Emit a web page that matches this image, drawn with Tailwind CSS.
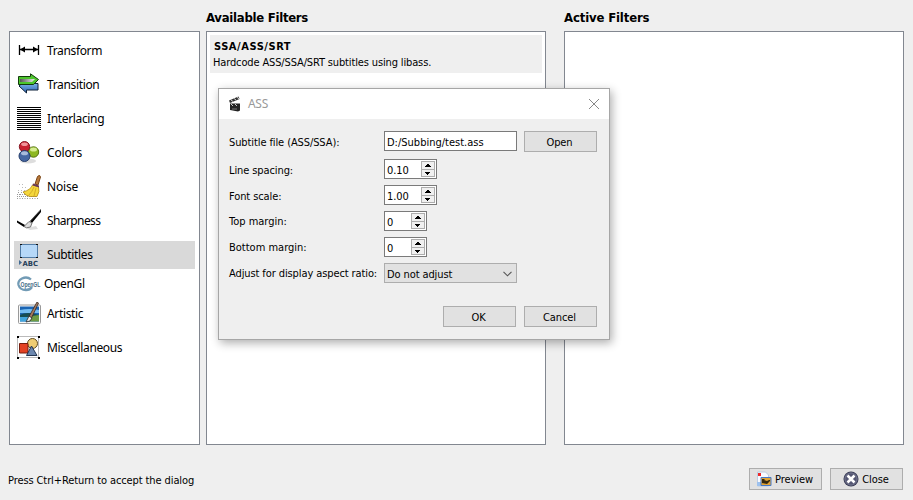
<!DOCTYPE html>
<html lang="en">
<head>
<meta charset="utf-8">
<title>Filters</title>
<script src="https://cdn.jsdelivr.net/npm/@tailwindcss/browser@4"></script>
</head>
<body class="relative flex h-[500px] w-[913px] flex-col overflow-hidden bg-[#efefef] font-['DejaVu_Sans_Condensed','DejaVu_Sans',sans-serif] text-[11px] leading-[14px] tracking-[-0.1px] text-black">
<main class="flex h-[445px] pl-[9px]">
  <nav class="mt-[31px] h-[414px] w-[191px] border border-[#828790] bg-white px-1 pt-[2px] font-['Noto_Sans',sans-serif] text-[12px] leading-[28px] tracking-[-0.35px]">
    <div class="flex h-[34px] items-center"><div class="flex h-7 w-full items-center gap-[6px] pl-[3px]">
      <svg class="size-6" viewBox="0 0 24 24"><path d="M2.500 6v10M21.500 6v10M3 10.500h18" stroke="#000" stroke-width="1.3"/><path d="M3 10.500l5-3v6zM21 10.500l-5-3v6z"/></svg>
      <span>Transform</span></div></div>
    <div class="flex h-[34px] items-center"><div class="flex h-7 w-full items-center gap-[6px] pl-[3px]">
      <svg class="size-6" viewBox="0 0 24 24"><defs><linearGradient id="gg"><stop stop-color="#555"/><stop offset="1" stop-color="#eee"/></linearGradient><linearGradient id="bl" x2="0" y2="1"><stop stop-color="#7fb4ea"/><stop offset="1" stop-color="#2a64b0"/></linearGradient></defs><path d="M21 10.500v6.500H9.500v3L2 13l3.500-3z" fill="url(#bl)" stroke="#0c2038"/><path d="M1.500 3.500h12V.8L21.500 6.500l-5 5h-15z" fill="#4cc62c" stroke="#123c0c"/><path d="M3 6h15l-3 3H3z" fill="url(#gg)"/></svg>
      <span>Transition</span></div></div>
    <div class="flex h-[34px] items-center"><div class="flex h-7 w-full items-center gap-[6px] pl-[3px]">
      <svg class="size-6" viewBox="0 0 24 24" shape-rendering="crispEdges"><path d="M0 .5h24M0 2.500h24M0 4.500h24M0 6.500h24M0 8.500h24M0 10.500h24M0 12.500h24M0 14.500h24M0 16.500h24M0 18.500h24M0 20.500h24M0 22.500h24" stroke="#000"/></svg>
      <span>Interlacing</span></div></div>
    <div class="flex h-[34px] items-center"><div class="flex h-7 w-full items-center gap-[6px] pl-[3px]">
      <svg class="size-6" viewBox="0 0 24 24"><ellipse cx="11" cy="20" rx="8" ry="2.500" fill="#0002"/><circle cx="16.500" cy="11" r="5.200" fill="#8db822" stroke="#567310"/><ellipse cx="16.500" cy="8.500" rx="3.500" ry="2" fill="#d6ec90"/><circle cx="7.500" cy="5.700" r="5.200" fill="#c82030" stroke="#861522"/><ellipse cx="7.500" cy="3.200" rx="3.400" ry="1.800" fill="#f0949a"/><circle cx="7.500" cy="15" r="5.500" fill="#4667a2" stroke="#263e6c"/><ellipse cx="7.500" cy="12.300" rx="3.500" ry="2" fill="#a8bbdb"/></svg>
      <span class="tracking-[-0.15px]">Colors</span></div></div>
    <div class="flex h-[34px] items-center"><div class="flex h-7 w-full items-center gap-[6px] pl-[3px]">
      <svg class="size-6" viewBox="0 0 24 24"><g fill="none" stroke="#999" stroke-width="1"><path d="M0 23.500h21" stroke-dasharray="1 1.500"/><path d="M0 21.500h20" stroke-dasharray="1 1"/><path d="M0 19.500h13" stroke-dasharray="1 1 2 1"/><path d="M1 17.500h8" stroke-dasharray="1 2"/><path d="M1 15.500h7M5 12.500h4M2 9.500h5" stroke-dasharray="1 2" stroke="#bbb"/></g><path d="M18 9L20.500 1.500q2.500-2.500 3 .500L21 10z" fill="#b9793b" stroke="#7b4617"/><path d="M15.500 10q-2 5-9.500 7 3 4 7 4.500h7q3-5 1.500-10z" fill="#f4d73c" stroke="#b48a16" stroke-width=".8"/><path d="M17 12q-2 5-5 8M19 13l-2 8" stroke="#d5ad28" fill="none"/><path d="M16 8.500l6 2v2l-6.500-2z" fill="#6b3a58"/></svg>
      <span class="tracking-[-0.15px]">Noise</span></div></div>
    <div class="flex h-[34px] items-center"><div class="flex h-7 w-full items-center gap-[6px] pl-[3px]">
      <svg class="size-6" viewBox="0 0 24 24"><path d="M9 19l10-2 2 3-8 1z" fill="#ddd"/><path d="M0 11.500l8 4.500-1 2-7-4.500z"/><path d="M13 12L24 0v3L15 14z"/><path d="M13 12.500L23.500 1.500" stroke="#777" stroke-width=".5"/><path d="M7 17.500l5-5 3 1.500-1.500 4-4 .8z" fill="#ddd" stroke="#555" stroke-width=".8"/></svg>
      <span class="tracking-[-0.6px]">Sharpness</span></div></div>
    <div class="flex h-[34px] items-center"><div class="flex h-7 w-full items-center gap-[6px] bg-[#d9d9d9] pl-[3px]">
      <svg class="size-6" viewBox="0 0 24 24"><path d="M3.500 1.500h17v13h-17z" fill="#b6d8f8" stroke="#527ca6"/><path d="M3 1h2v1H3zM19 1h2v1h-2zM3 14h2v1H3zM19 14h2v1h-2z" fill="#111"/><path d="M2 17l3 2.500L2 22z" fill="#426b94"/><text x="5.500" y="22.500" textLength="15.500" lengthAdjust="spacingAndGlyphs" font-family="DejaVu Sans" font-weight="bold" font-size="7" style="letter-spacing:0" fill="#263f59">ABC</text></svg>
      <span>Subtitles</span></div></div>
    <div class="flex h-[25px] items-start"><div class="flex h-[23px] w-full items-center gap-[5px] pl-[3px]">
      <svg class="h-4 w-[22px] overflow-visible" viewBox="0 0 22 16"><path d="M14 3.500Q10 0 5 2.500.5 5 1.500 9 3 14 9 14q4 0 6-3" fill="none" stroke="#729bb5" stroke-width="2.300"/><g transform="translate(3.500 10.500) scale(.72 1)"><text font-family="Liberation Sans" font-weight="bold" font-size="7" style="letter-spacing:0" fill="#456c88">OpenGL</text></g></svg>
      <span>OpenGl</span></div></div>
    <div class="flex h-[34px] items-center"><div class="flex h-7 w-full items-center gap-[6px] pl-[3px]">
      <svg class="size-6" viewBox="0 0 24 24"><rect x="1.500" y="3" width="22" height="18.500" rx="1" fill="#f8f8f8" stroke="#999"/><path d="M3 4.500h19v15H3z" fill="#1b65b4"/><path d="M3 8q9-2 19 0v3H3z" fill="#76bdf1"/><path d="M3 13q7-4 19 0v2H3z" fill="#174e54"/><path d="M3 15h12l-5 4.500H3z" fill="#42a5dc"/><path d="M15 14l7-1v6.500h-10z" fill="#6d9b43"/><path d="M12 14.500L20 0l1.500 1-7 15z" fill="#a57a5c" stroke="#392a25" stroke-width=".8"/><path d="M12 14l3 2-2 3-4 1z" fill="#eee" stroke="#222" stroke-width=".8"/></svg>
      <span>Artistic</span></div></div>
    <div class="flex h-[34px] items-center"><div class="flex h-7 w-full items-center gap-[6px] pl-[3px]">
      <svg class="size-6" viewBox="0 0 24 24" shape-rendering="auto"><path d="M.5.5h21v21H.5z" fill="none" stroke="#777" stroke-dasharray="1 1"/><path d="M0 0h2v2H0zM21 0h2v2h-2zM0 21h2v2H0zM21 21h2v2h-2z"/><circle cx="15.500" cy="7.500" r="5" fill="#efcd73" stroke="#5e4b20"/><path d="M2.500 7.500h8.500v9.500H2.500z" fill="#e34223" stroke="#761d0e"/><path d="M14.500 10L20 19.500H9.500z" fill="#6c87ae" stroke="#243753"/></svg>
      <span>Miscellaneous</span></div></div>
  </nav>
  <section class="ml-[6px] w-[340px]">
    <h2 class="flex h-[31px] items-center pt-[5px] text-[13px] font-bold tracking-[-0.27px]">Available Filters</h2>
    <div class="h-[414px] border border-[#828790] bg-white p-[3px]">
      <div class="h-[38px] bg-[#efefef] pl-[3px] pt-[4px]">
        <p class="pl-px text-[11px] font-bold leading-[15px] tracking-[0.55px]"><span>SSA/ASS/SRT</span></p>
        <p class="pt-px leading-[16px] tracking-[-0.14px]"><span>Hardcode ASS/SSA/SRT subtitles using libass.</span></p>
      </div>
    </div>
  </section>
  <section class="ml-[18px] w-[340px]">
    <h2 class="flex h-[31px] items-center pt-[5px] text-[13px] font-bold tracking-[-0.15px]">Active Filters</h2>
    <div class="h-[414px] border border-[#828790] bg-white"></div>
  </section>
</main>
<footer class="flex h-[55px] items-start pl-2 pt-[23px]">
  <p class="mt-[6px] flex-1">Press Ctrl+Return to accept the dialog</p>
  <button class="flex h-[22px] w-[73px] items-center justify-center gap-[3px] border border-[#adadad] bg-[#e1e1e1] pr-[2px]">
    <svg class="size-4" viewBox="0 0 16 16"><path d="M1.500 1h8l3 3v11h-11z" fill="#f7faff" stroke="#bccbe0"/><path d="M1 11h4v4H1z" fill="#9dc1ee"/><path d="M2 2h3v3H2z" fill="#ee2929"/><path d="M5 6.500h10v8H5z" fill="#e1a336" stroke="#4478c7"/><path d="M6 8h3l-1 1 3 1 2-1h1v1l-3 3-5-1z" fill="#35290f"/></svg>
    <span class="pt-[2px]">Preview</span></button>
  <button class="ml-2 mr-[10px] flex h-[22px] w-[73px] items-center justify-center gap-[3px] border border-[#adadad] bg-[#e1e1e1] pr-px">
    <svg class="size-4" viewBox="0 0 16 16"><circle cx="8" cy="8" r="7.500" fill="#343650"/><circle cx="8" cy="8" r="6.200" fill="#555773" stroke="#888ca4" stroke-width=".7"/><path d="M4.500 4.500l7 7M11.500 4.500l-7 7" stroke="#fff" stroke-width="2.600"/></svg>
    <span class="pt-[2px]">Close</span></button>
</footer>

<div role="dialog" class="absolute left-[218px] top-[88px] flex h-[252px] w-[392px] flex-col border border-[#a6a6a6] bg-[#efefef] shadow-[2px_3px_9px_rgba(0,0,0,0.32)]">
  <header class="flex h-[30px] items-center bg-white pl-[9px] pr-[9px] font-['Noto_Sans',sans-serif] text-[12px] tracking-[-0.3px] text-[#999]">
    <svg class="size-4" viewBox="0 0 16 16"><path d="M2 7.500h10v7l-2 1-8-1.500z" fill="#222"/><path d="M1 4.500L10.500.5l1 2.500L2 7z" fill="#333"/><path d="M3 4l2 1.500M6 2.500L8 4M9 1.300l2 1.500M3 8l2 2M7 8l2 2" stroke="#ddd" stroke-width=".9"/><path d="M4 13h5" stroke="#777"/></svg>
    <span class="ml-[4px] flex-1">ASS</span>
    <svg class="h-3 w-3" viewBox="0 0 12 12"><path d="M1 1l10 10M11 1L1 11" stroke="#888" fill="none"/></svg>
  </header>
  <form class="flex flex-1 flex-col pl-[10px] pr-3 pt-3">
    <div class="mb-[7px] flex h-[21px]"><label class="w-[155px] pt-[5px]">Subtitle file (ASS/SSA):</label><div class="h-5 w-[133px] border border-[#7a7a7a] bg-white pl-[2px] pt-1 tracking-normal"><span>D:/Subbing/test.ass</span></div><button type="button" class="ml-[7px] h-[21px] w-[73px] border border-[#adadad] bg-[#e1e1e1] pr-[2px] pt-[2px]"><span>Open</span></button></div>
    <div class="mb-[6px] flex h-5"><label class="w-[155px] pt-[5px]">Line spacing:</label><div class="flex h-5 w-[53px] border border-[#7a7a7a] bg-white p-px pl-[2px]"><span class="flex-1 pt-[3px]">0.10</span>
      <svg class="h-4 w-[14px]" viewBox="0 0 14 16" shape-rendering="crispEdges"><path d="M.5.5h13v15H.5zM0 8.500h14" fill="#f0f0f0" stroke="#adadad"/><path d="M6 3h2v1h1v1H5V4h1zM4 5h6v1H4zM4 11h5v1h-1v1H7v1H6v-1H5v-1H4z"/></svg></div></div>
    <div class="mb-[6px] flex h-5"><label class="w-[155px] pt-[5px]">Font scale:</label><div class="flex h-5 w-[53px] border border-[#7a7a7a] bg-white p-px pl-[2px]"><span class="flex-1 pt-[3px]">1.00</span>
      <svg class="h-4 w-[14px]" viewBox="0 0 14 16" shape-rendering="crispEdges"><path d="M.5.5h13v15H.5zM0 8.500h14" fill="#f0f0f0" stroke="#adadad"/><path d="M6 3h2v1h1v1H5V4h1zM4 5h6v1H4zM4 11h5v1h-1v1H7v1H6v-1H5v-1H4z"/></svg></div></div>
    <div class="mb-[6px] flex h-5"><label class="w-[155px] pt-1 tracking-normal">Top margin:</label><div class="flex h-5 w-[43px] border border-[#7a7a7a] bg-white p-px pl-[2px]"><span class="flex-1 pt-[3px]">0</span>
      <svg class="h-4 w-[14px]" viewBox="0 0 14 16" shape-rendering="crispEdges"><path d="M.5.5h13v15H.5zM0 8.500h14" fill="#f0f0f0" stroke="#adadad"/><path d="M6 3h2v1h1v1H5V4h1zM4 5h6v1H4zM4 11h5v1h-1v1H7v1H6v-1H5v-1H4z"/></svg></div></div>
    <div class="mb-[6px] flex h-5"><label class="w-[155px] pt-1 tracking-normal">Bottom margin:</label><div class="flex h-5 w-[43px] border border-[#7a7a7a] bg-white p-px pl-[2px]"><span class="flex-1 pt-[3px]">0</span>
      <svg class="h-4 w-[14px]" viewBox="0 0 14 16" shape-rendering="crispEdges"><path d="M.5.5h13v15H.5zM0 8.500h14" fill="#f0f0f0" stroke="#adadad"/><path d="M6 3h2v1h1v1H5V4h1zM4 5h6v1H4zM4 11h5v1h-1v1H7v1H6v-1H5v-1H4z"/></svg></div></div>
    <div class="flex h-5"><label class="w-[155px] whitespace-nowrap pt-1">Adjust for display aspect ratio:</label><div class="flex h-5 w-[133px] items-center border border-[#adadad] bg-[#e1e1e1] pl-[2px] pr-1"><span class="flex-1 pt-[3px]">Do not adjust</span><svg class="mt-px h-[6px] w-[9px]" viewBox="0 0 9 6"><path d="M.5.8l4 4 4-4" fill="none" stroke="#555" stroke-width="1.100"/></svg></div></div>
    <div class="mt-[23px] flex justify-end gap-2"><button type="button" class="h-[21px] w-[73px] border border-[#adadad] bg-[#e1e1e1] pr-[2px] pt-[2px]"><span>OK</span></button><button type="button" class="h-[21px] w-[73px] border border-[#adadad] bg-[#e1e1e1] pr-[2px] pt-[2px]"><span>Cancel</span></button></div>
  </form>
</div>
</body>
</html>
